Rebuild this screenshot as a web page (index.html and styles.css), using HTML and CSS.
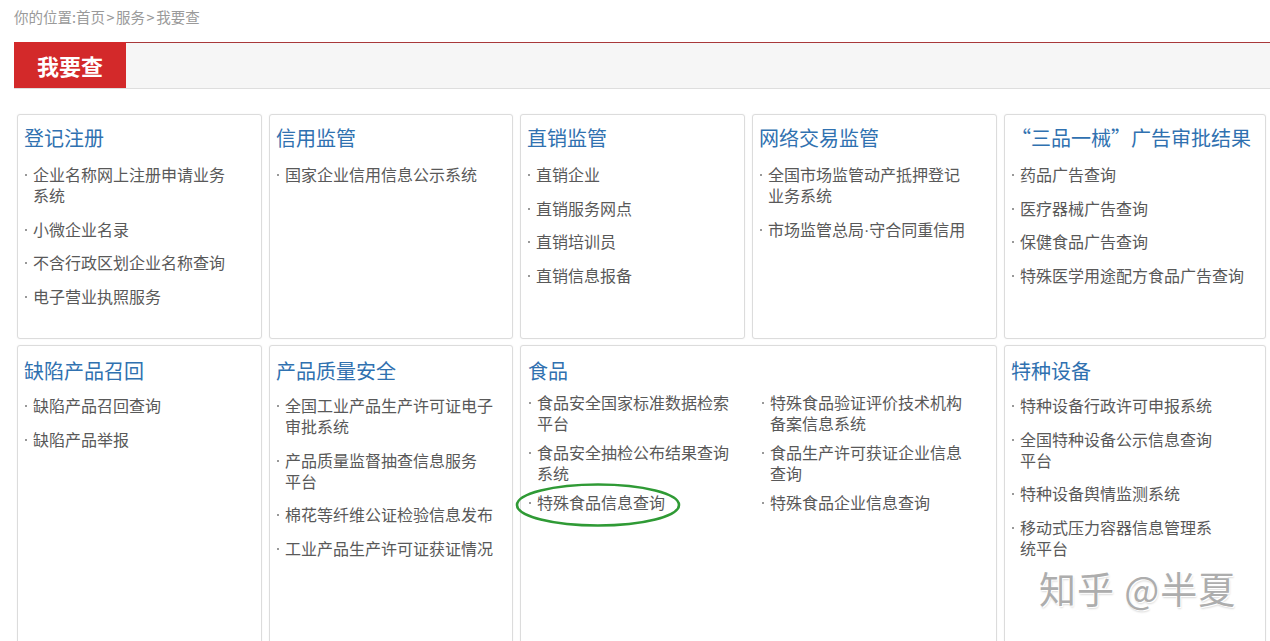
FILE: index.html
```html
<!DOCTYPE html>
<html lang="zh-CN">
<head>
<meta charset="utf-8">
<title>我要查</title>
<link rel="stylesheet" href="styles.css">
</head>
<body>
<div class="page">
  <div class="crumb">你的位置:首页<span class="sep">&gt;</span>服务<span class="sep">&gt;</span>我要查</div>
  <div class="bar">
    <div class="tab">我要查</div>
  </div>
  <div class="grid">
    <section class="card">
      <h2>登记注册</h2>
      <ul>
        <li><span>企业名称网上注册申请业务<br>系统</span></li>
        <li><span>小微企业名录</span></li>
        <li><span>不含行政区划企业名称查询</span></li>
        <li><span>电子营业执照服务</span></li>
      </ul>
    </section>
    <section class="card">
      <h2>信用监管</h2>
      <ul>
        <li><span>国家企业信用信息公示系统</span></li>
      </ul>
    </section>
    <section class="card">
      <h2>直销监管</h2>
      <ul>
        <li><span>直销企业</span></li>
        <li><span>直销服务网点</span></li>
        <li><span>直销培训员</span></li>
        <li><span>直销信息报备</span></li>
      </ul>
    </section>
    <section class="card">
      <h2>网络交易监管</h2>
      <ul>
        <li><span>全国市场监管动产抵押登记<br>业务系统</span></li>
        <li><span>市场监管总局<span class="mid">·</span>守合同重信用</span></li>
      </ul>
    </section>
    <section class="card">
      <h2>“三品一械”广告审批结果</h2>
      <ul>
        <li><span>药品广告查询</span></li>
        <li><span>医疗器械广告查询</span></li>
        <li><span>保健食品广告查询</span></li>
        <li><span>特殊医学用途配方食品广告查询</span></li>
      </ul>
    </section>

    <section class="card tall">
      <h2>缺陷产品召回</h2>
      <ul>
        <li><span>缺陷产品召回查询</span></li>
        <li><span>缺陷产品举报</span></li>
      </ul>
    </section>
    <section class="card tall">
      <h2>产品质量安全</h2>
      <ul>
        <li><span>全国工业产品生产许可证电子<br>审批系统</span></li>
        <li><span>产品质量监督抽查信息服务<br>平台</span></li>
        <li><span>棉花等纤维公证检验信息发布</span></li>
        <li><span>工业产品生产许可证获证情况</span></li>
      </ul>
    </section>
    <section class="card tall wide">
      <h2>食品</h2>
      <ul class="two-col">
        <li><span>食品安全国家标准数据检索<br>平台</span></li>
        <li><span>特殊食品验证评价技术机构<br>备案信息系统</span></li>
        <li><span>食品安全抽检公布结果查询<br>系统</span></li>
        <li><span>食品生产许可获证企业信息<br>查询</span></li>
        <li><span>特殊食品信息查询</span></li>
        <li><span>特殊食品企业信息查询</span></li>
      </ul>
    </section>
    <section class="card tall">
      <h2>特种设备</h2>
      <ul>
        <li><span>特种设备行政许可申报系统</span></li>
        <li><span>全国特种设备公示信息查询<br>平台</span></li>
        <li><span>特种设备舆情监测系统</span></li>
        <li><span>移动式压力容器信息管理系<br>统平台</span></li>
      </ul>
    </section>
  </div>
</div>

<svg class="circle-mark" width="170" height="50" viewBox="0 0 170 50" aria-hidden="true">
  <ellipse cx="84" cy="24" rx="81" ry="20.5" fill="none" stroke="#2f9a35" stroke-width="2.6"/>
</svg>
<div class="watermark">知乎 @半夏</div>
</body>
</html>
```
FILE: styles.css
```css
html, body {
  margin: 0;
  padding: 0;
  background: #fff;
}
body {
  font-family: "Noto Sans CJK SC", "Noto Sans", sans-serif;
  position: relative;
  overflow: hidden;
  height: 641px;
}
.page {
  padding-left: 14px;
}
.crumb {
  height: 34px;
  line-height: 34px;
  font-size: 14.5px;
  color: #9a9a9a;
  margin-bottom: 8px;
}
.crumb .sep {
  padding: 0 1.5px;
}
.bar {
  width: 1256px;
  height: 45px;
  border-top: 1px solid #a8383a;
  border-bottom: 1px solid #dedede;
  background: #f6f6f6;
  display: flex;
}
.tab {
  width: 112px;
  margin-top: -1px;
  height: 46px;
  background: #d3292a;
  color: #fff;
  font-size: 22px;
  font-weight: bold;
  line-height: 46px;
  text-align: center;
}
.grid {
  margin: 25px 0 0 3px;
  display: grid;
  grid-template-columns: 245px 244px 225px 245px 262px;
  grid-template-rows: 225px 310px;
  column-gap: 7px;
  row-gap: 6px;
}
.card {
  box-sizing: border-box;
  border: 1px solid #dcdcdc;
  border-radius: 3px;
  box-shadow: 0 0 2px rgba(0, 0, 0, 0.06);
  padding: 9px 6px 0 6px;
  background: #fff;
}
.card.tall {
  padding-top: 11px;
}
.card.wide {
  grid-column: span 2;
  padding-left: 7px;
}
.card h2 {
  margin: 0;
  font-size: 20px;
  font-weight: normal;
  line-height: 28px;
  color: #3071b0;
  white-space: nowrap;
}
.card ul {
  list-style: none;
  margin: 0;
  padding: 12px 0 0 0;
}
.card.tall ul {
  padding-top: 10px;
}
.card li {
  display: flex;
  align-items: flex-start;
  font-size: 16px;
  line-height: 21px;
  color: #595959;
  margin-bottom: 12.5px;
  white-space: nowrap;
}
.card li::before {
  content: "";
  flex: 0 0 2px;
  height: 2px;
  margin: 10px 6px 0 1px;
  background: #777;
  border-radius: 1px;
}
.card li .mid {
  font-family: "Liberation Sans", sans-serif;
}
.card ul.two-col {
  display: grid;
  grid-template-columns: 233px 233px;
  row-gap: 8px;
  padding-top: 7px;
}
.card ul.two-col li {
  margin-bottom: 0;
}
.circle-mark {
  position: absolute;
  left: 514px;
  top: 481px;
}
.watermark {
  position: absolute;
  left: 1039px;
  top: 568px;
  font-size: 37px;
  line-height: 40px;
  color: #adadad;
  letter-spacing: 1px;
  text-shadow: 1px 1px 0 #fff, -1px -1px 0 #fff, 1px 2px 2px rgba(0,0,0,0.15);
  white-space: nowrap;
}
```
